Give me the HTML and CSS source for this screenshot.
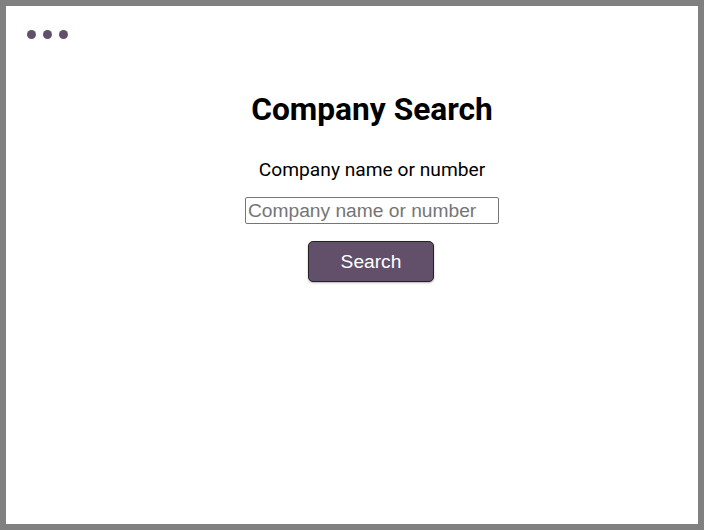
FILE: index.html
```html
<!DOCTYPE html>
<html>
<head>
<meta charset="utf-8">
<link rel="stylesheet" href="styles.css">
</head>
<body>
<div class="frame">
  <div class="dots"><span class="dot"></span><span class="dot"></span><span class="dot"></span></div>
  <main class="content">
    <h1 class="title">Company Search</h1>
    <label class="label" for="q">Company name or number</label>
    <input class="field" id="q" type="text" placeholder="Company name or number">
    <button class="btn" type="button">Search</button>
  </main>
</div>
</body>
</html>
```

FILE: styles.css
```css
html, body { margin: 0; padding: 0; background: #fff; }
.frame {
  box-sizing: border-box;
  width: 704px;
  height: 530px;
  border: 6px solid #808080;
  position: relative;
  background: #fff;
}
.dots {
  position: absolute;
  left: 21px;
  top: 24px;
  display: flex;
  gap: 7px;
}
.dot {
  width: 9px;
  height: 9px;
  border-radius: 50%;
  background: #62506a;
}
.content {
  display: flex;
  flex-direction: column;
  align-items: center;
  padding-left: 40px;
  padding-top: 84px;
}
.title {
  margin: 0;
  font-family: Roboto, sans-serif;
  font-weight: 700;
  font-size: 31.7px;
  line-height: 40px;
  color: #000;
}
.label {
  margin-top: 28px;
  font-family: Roboto, sans-serif;
  font-size: 19.2px;
  line-height: 24px;
  color: #000;
}
.field {
  margin-top: 15px;
  box-sizing: border-box;
  width: 254px;
  height: 27px;
  padding: 0 2px;
  border: 1px solid #767676;
  border-radius: 2px;
  font-family: "Liberation Sans", Arial, sans-serif;
  font-size: 19.2px;
  color: #000;
}
.field::placeholder { color: #757575; }
.btn {
  margin-top: 17px;
  margin-right: 2px;
  box-sizing: border-box;
  width: 126px;
  height: 41px;
  background: #62506a;
  border: 1px solid #222;
  border-radius: 5px;
  color: #fff;
  font-family: "Liberation Sans", Arial, sans-serif;
  font-size: 19.2px;
  box-shadow: 0 1px 2px rgba(0,0,0,0.3);
}
```
